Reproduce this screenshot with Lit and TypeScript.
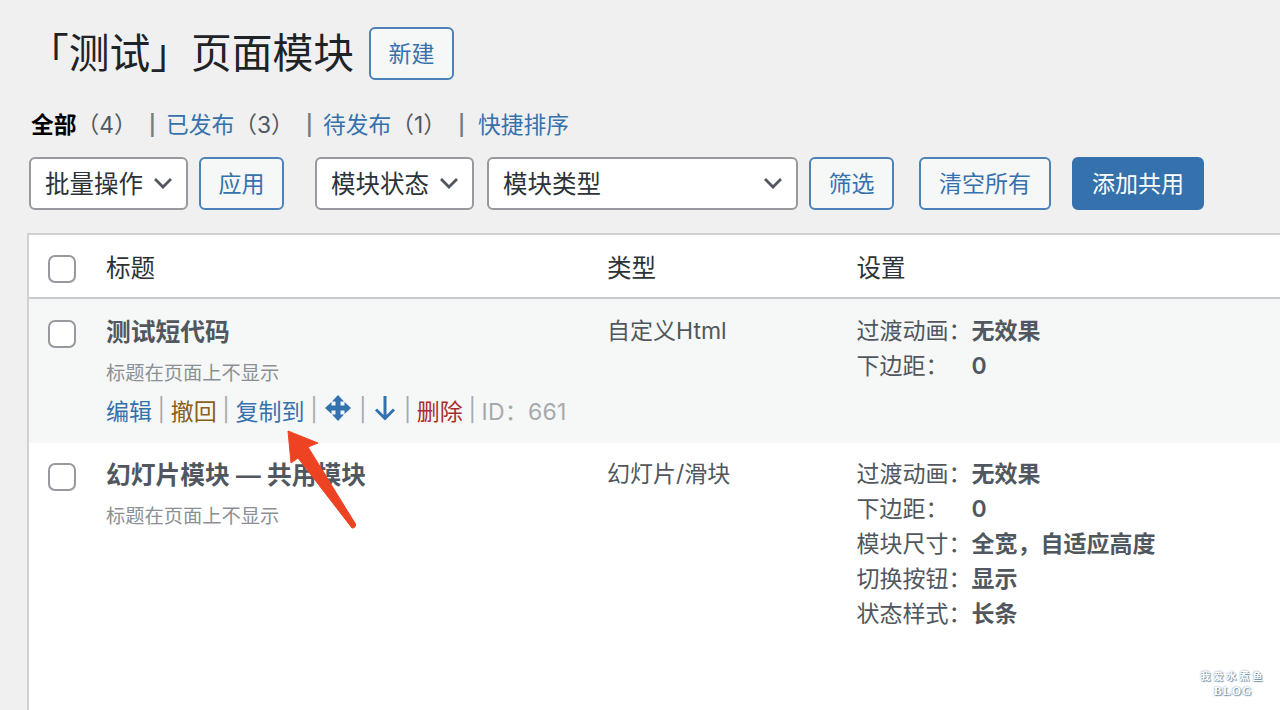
import { LitElement, html, css, svg } from "lit";
import { customElement } from "lit/decorators.js";

const chevron = html`<svg class="chev" width="20" height="12" viewBox="0 0 20 12"><path d="M2 2l8 8 8-8" fill="none" stroke="#50575e" stroke-width="2.8"/></svg>`;

@customElement("app-root")
export class AppRoot extends LitElement {
  static styles = css`
    :host {
      display: block;
      position: relative;
      width: 1280px;
      height: 710px;
      overflow: hidden;
      background: #f0f0f1;
      color: #3c434a;
      font-family: Inter, "Noto Sans CJK SC", sans-serif;
      font-size: 23px;
    }
    a { color: #3572ad; text-decoration: none; }
    .head { display: flex; align-items: center; height: 53px; margin: 27px 0 0 28px; }
    h1 { margin: 0; font-size: 40.75px; font-weight: 400; color: #1d2327; line-height: 53px; }
    .btn {
      box-sizing: border-box; display: inline-flex; align-items: center; justify-content: center;
      height: 53px; padding: 0 17.5px 3px; border: 2px solid #4a82b9; border-radius: 6px;
      background: #f6f7f7; color: #3572ad; white-space: nowrap; font-size: 23px;
    }
    .btn.wide { padding: 0 18px 3px; }
    .head .btn { margin-left: 15px; }
    .btn.primary { background: #3572ad; border-color: #3572ad; color: #fff; }
    .subs { display: flex; align-items: center; height: 32px; margin: 27px 0 0 31px; white-space: nowrap; font-size: 22.75px; }
    .subs b { color: #000; font-weight: 600; }
    .subs .count { color: #50575e; }
    .subs .bar { color: #787c82; margin: 4px 10px 0 12px; font-size: 20px; font-weight: 600; }
    .subs .bar.last { margin-right: 13px; }
    .filters { display: flex; align-items: center; margin: 18px 0 0 29px; }
    .select {
      box-sizing: border-box; display: flex; align-items: center; justify-content: space-between;
      height: 53px; padding: 0 13.5px 2px 14px; border: 2px solid #97999e; border-radius: 6px;
      background: #fff; color: #2c3338; font-size: 24.5px;
    }
    .w1 { width: 159px; }
    .w3 { width: 311px; }
    .ml11 { margin-left: 11px; }
    .ml13 { margin-left: 13px; }
    .ml31 { margin-left: 31px; }
    .ml25 { margin-left: 25px; }
    .ml21 { margin-left: 21px; }
    .table {
      margin: 23px 0 0 27px; width: 1300px; height: 500px; box-sizing: border-box;
      background: #fff; border: 2px solid #d0d1d4; border-right: 0; border-bottom: 0;
    }
    .row { display: grid; grid-template-columns: 77px 501px 249.500px 1fr; }
    .header { height: 62px; align-items: center; border-bottom: 2px solid #c9cacd; color: #2c3338; font-size: 24.5px; }
    .header .cb { margin-top: 6px; }
    .body { padding-top: 14px; }
    .active { background: #f6f7f7; height: 144px; box-sizing: border-box; }
    .plain { height: 250px; box-sizing: border-box; padding-top: 13px; }
    .cb {
      box-sizing: border-box; width: 28px; height: 28px; margin-left: 19px; margin-top: 7px;
      border: 2px solid #97999e; border-radius: 7px; background: #fff;
    }
    .title { font-size: 24.75px; font-weight: 600; color: #50575e; line-height: 35px; white-space: nowrap; margin-top: 2px; }
    .note { font-size: 19.25px; color: #8c8f94; line-height: 27px; margin-top: 10px; }
    .actions { display: flex; align-items: center; gap: 5.6px; height: 35px; margin-top: 5px; white-space: nowrap; }
    .sep { color: #a7aaad; font-size: 22.75px; }
    .warn { color: #8a6116; }
    .del { color: #a82e2e; }
    .id { color: #a7aaad; letter-spacing: 0.2px; }
    .icon { display: block; margin: 0 2px 4px; }
    .type { line-height: 35px; color: #50575e; margin-top: 1px; }
    .cfg { margin-top: 1px; }
    .setting { display: flex; line-height: 35px; color: #50575e; white-space: nowrap; }
    .setting span { width: 115px; }
    .setting b { font-weight: 600; }
    .arrow { position: absolute; left: 280px; top: 425px; }
    .mark {
      position: absolute; left: 1196px; top: 669px; width: 74px; text-align: center; color: #fff;
      font-family: "Noto Sans CJK SC", sans-serif; font-size: 10px; line-height: 14.5px; font-weight: 700;
      letter-spacing: 3px; text-shadow: 0 0 2px #5a7f9a, 1px 1px 1px #7f9db3;
    }
    .mark div:last-child { font-family: "Liberation Serif", serif; font-size: 12px; letter-spacing: 1px; }
  `;

  private settings(list: [string, string][]) {
    return html`<div class="cfg">${list.map(([k, v]) => html`<div class="setting"><span>${k}</span><b>${v}</b></div>`)}</div>`;
  }

  render() {
    return html`
      <div class="head"><h1>「测试」页面模块</h1><a class="btn">新建</a></div>
      <div class="subs">
        <b>全部</b><span class="count">（4）</span><span class="bar">|</span>
        <a>已发布</a><span class="count">（3）</span><span class="bar">|</span>
        <a>待发布</a><span class="count">（1）</span><span class="bar last">|</span>
        <a>快捷排序</a>
      </div>
      <div class="filters">
        <div class="select w1">批量操作${chevron}</div>
        <a class="btn ml11">应用</a>
        <div class="select w1 ml31">模块状态${chevron}</div>
        <div class="select w3 ml13">模块类型${chevron}</div>
        <a class="btn ml11">筛选</a>
        <a class="btn wide ml25">清空所有</a>
        <a class="btn wide primary ml21">添加共用</a>
      </div>
      <div class="table">
        <div class="row header"><div class="cb"></div><div>标题</div><div>类型</div><div>设置</div></div>
        <div class="row body active">
          <div class="cb"></div>
          <div>
            <div class="title">测试短代码</div>
            <div class="note">标题在页面上不显示</div>
            <div class="actions">
              <a>编辑</a><span class="sep">|</span>
              <a class="warn">撤回</a><span class="sep">|</span>
              <a>复制到</a><span class="sep">|</span>
              <svg class="icon" width="26" height="26" viewBox="0 0 26 26"><path fill="#3572ad" d="M13 0L19 6.500H15.500V10.500H19.500V7L26 13L19.500 19V15.500H15.500V19.500H19L13 26L7 19.500H10.500V15.500H6.500V19L0 13L6.500 7V10.500H10.500V6.500H7Z"/></svg>
              <span class="sep">|</span>
              <svg class="icon" width="22" height="26" viewBox="0 0 22 26"><path fill="none" stroke="#3572ad" stroke-width="3" d="M11 1v22M2 14.500l9 9 9-9"/></svg>
              <span class="sep">|</span>
              <a class="del">删除</a><span class="sep">|</span>
              <span class="id">ID：661</span>
            </div>
          </div>
          <div class="type">自定义Html</div>
          ${this.settings([["过渡动画：", "无效果"], ["下边距：", "0"]])}
        </div>
        <div class="row plain">
          <div class="cb"></div>
          <div>
            <div class="title">幻灯片模块 — 共用模块</div>
            <div class="note">标题在页面上不显示</div>
          </div>
          <div class="type">幻灯片/滑块</div>
          ${this.settings([["过渡动画：", "无效果"], ["下边距：", "0"], ["模块尺寸：", "全宽，自适应高度"], ["切换按钮：", "显示"], ["状态样式：", "长条"]])}
        </div>
      </div>
      <svg class="arrow" width="85" height="110" viewBox="280 425 85 110">
        ${svg`<path fill="#ee4323" stroke="#ee4323" stroke-width="1" stroke-linejoin="round" d="M288 431L318 443L308 447L355.500 524Q356 528 352 528L298 458L291 463Z"/>`}
      </svg>
      <div class="mark"><div>我爱水煮鱼</div><div>BLOG</div></div>
    `;
  }
}
